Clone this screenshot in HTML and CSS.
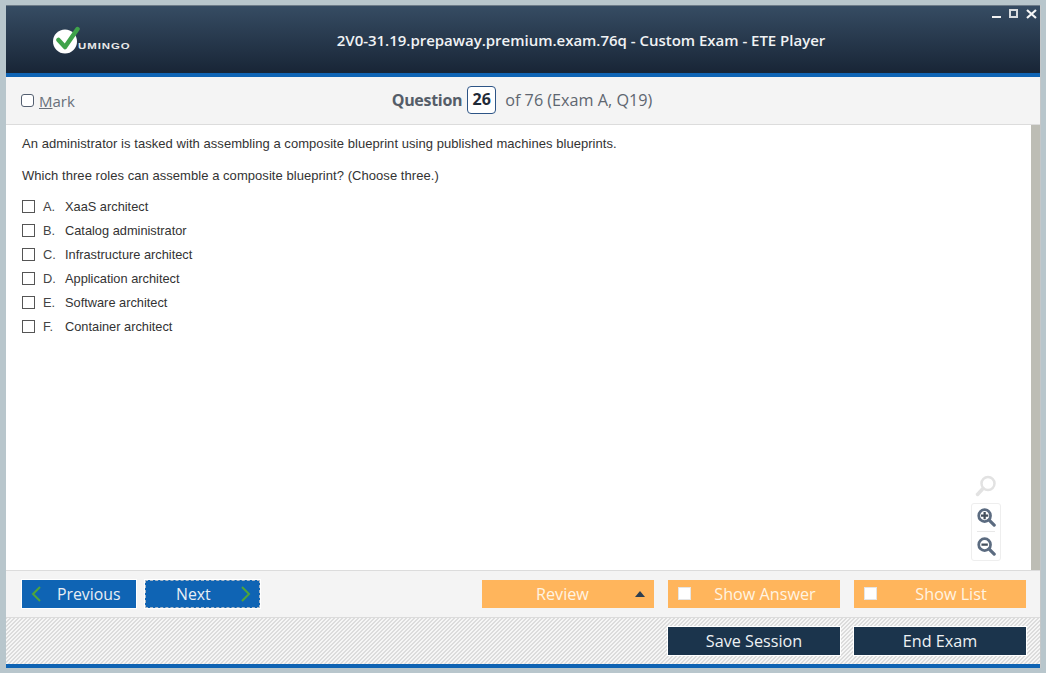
FILE: index.html
```html
<!DOCTYPE html>
<html lang="en">
<head>
<meta charset="utf-8">
<title>ETE Player</title>
<link rel="stylesheet" href="styles.css">
</head>
<body>
<div class="window">
  <header class="titlebar">
    <div class="logo">
      <svg class="logo-mark" width="30" height="28" viewBox="0 0 30 28">
        <circle cx="13" cy="15.500" r="12" fill="#fff"/>
        <path d="M6.500 14 L13 21 L25.500 3" fill="none" stroke="#3fa34a" stroke-width="4.500" stroke-linecap="round" stroke-linejoin="round"/>
      </svg>
      <span class="logo-text">UMINGO</span>
    </div>
    <h1 class="title">2V0-31.19.prepaway.premium.exam.76q - Custom Exam - ETE Player</h1>
    <div class="winctl">
      <svg width="50" height="16" viewBox="0 0 50 16">
        <rect x="2" y="10" width="9" height="2" fill="#f2f2f2"/>
        <rect x="20" y="4" width="7" height="7" fill="none" stroke="#d8dcdf" stroke-width="2"/>
        <path d="M37 4 L46 12 M46 4 L37 12" stroke="#f5f5f5" stroke-width="2.200"/>
      </svg>
    </div>
  </header>
  <div class="toolbar">
    <label class="mark"><span class="mark-box"></span><span><u>M</u>ark</span></label>
    <div class="qinfo"><b>Question</b><span class="qnum">26</span><span class="qrest">of 76 (Exam A, Q19)</span></div>
  </div>
  <main class="content">
    <div class="question">
      <p class="para">An administrator is tasked with assembling a composite blueprint using published machines blueprints.</p>
      <p class="para">Which three roles can assemble a composite blueprint? (Choose three.)</p>
      <ul class="options">
        <li class="option"><span class="box"></span><span class="letter">A.</span><span>XaaS architect</span></li>
        <li class="option"><span class="box"></span><span class="letter">B.</span><span>Catalog administrator</span></li>
        <li class="option"><span class="box"></span><span class="letter">C.</span><span>Infrastructure architect</span></li>
        <li class="option"><span class="box"></span><span class="letter">D.</span><span>Application architect</span></li>
        <li class="option"><span class="box"></span><span class="letter">E.</span><span>Software architect</span></li>
        <li class="option"><span class="box"></span><span class="letter">F.</span><span>Container architect</span></li>
      </ul>
    </div>
    <div class="zoomtools">
      <svg class="zoom-reset" width="24" height="24" viewBox="0 0 24 24"><circle cx="14" cy="9.500" r="6.500" fill="none" stroke="#e2e2e2" stroke-width="2.500"/><path d="M9 14.500 L3.500 20.500" stroke="#e2e2e2" stroke-width="3.500" stroke-linecap="round"/></svg>
      <div class="zoom-panel">
        <svg class="zoom-icon" width="20" height="20" viewBox="0 0 22 22"><circle cx="9.500" cy="9.500" r="6.500" fill="none" stroke="#5b6b80" stroke-width="3"/><path d="M14.500 14.500 L20 20" stroke="#5b6b80" stroke-width="3.500" stroke-linecap="round"/><path d="M5.500 9.500 H13.500 M9.500 5.500 V13.500" stroke="#444f5c" stroke-width="2.500"/></svg>
        <span class="zoom-sep"></span>
        <svg class="zoom-icon" width="20" height="20" viewBox="0 0 22 22"><circle cx="9.500" cy="9.500" r="6.500" fill="none" stroke="#5b6b80" stroke-width="3"/><path d="M14.500 14.500 L20 20" stroke="#5b6b80" stroke-width="3.500" stroke-linecap="round"/><path d="M6 9.500 H13" stroke="#444f5c" stroke-width="2.500"/></svg>
      </div>
    </div>
    <div class="scrollbar"></div>
  </main>
  <div class="actions">
    <div class="nav">
      <button class="btn btn-blue btn-prev"><svg width="12" height="18" viewBox="0 0 12 18"><path d="M10 2 L3 9 L10 16" fill="none" stroke="#4fa53a" stroke-width="2"/></svg><span>Previous</span></button>
      <button class="btn btn-blue btn-next"><span>Next</span><svg width="12" height="18" viewBox="0 0 12 18"><path d="M2 2 L9 9 L2 16" fill="none" stroke="#4fa53a" stroke-width="2"/></svg></button>
    </div>
    <div class="tools">
      <button class="btn btn-orange btn-review"><span>Review</span><i class="caret"></i></button>
      <button class="btn btn-orange btn-check"><i class="tick"></i><span>Show Answer</span></button>
      <button class="btn btn-orange btn-check"><i class="tick"></i><span>Show List</span></button>
    </div>
  </div>
  <footer class="footer">
    <button class="btn btn-navy">Save Session</button>
    <button class="btn btn-navy">End Exam</button>
  </footer>
</div>
</body>
</html>
```
FILE: styles.css
```css
* { box-sizing: border-box; }
html, body { margin: 0; height: 100%; }
body {
  background: #b8c6cc;
  padding: 5px 5px 4px 6px;
  overflow: hidden;
  font-family: "Open Sans", "Noto Sans", sans-serif;
}
.window {
  width: 1035px;
  height: 663px;
  display: flex;
  flex-direction: column;
  background: #fff;
  border-right: 1px solid #c4c8ca;
}
.titlebar {
  height: 72px;
  flex: none;
  display: flex;
  align-items: center;
  justify-content: center;
  position: relative;
  padding-left: 116px;
  background: linear-gradient(#364c63, #182536);
  border-top: 1px solid #6d7b88;
  border-bottom: 4px solid #0f64b4;
}
.logo {
  position: absolute;
  left: 46px;
  top: 20px;
  display: flex;
  align-items: flex-end;
}
.logo-mark { display: block; }
.logo-text {
  font: bold 9.500px "Liberation Sans", sans-serif;
  letter-spacing: 0.800px;
  color: #e8e8e8;
  margin-left: -4px;
  margin-bottom: 3px;
  transform: scaleX(1.200);
  transform-origin: left;
}
.title {
  margin: 1px 0 0;
  font-size: 15px;
  font-weight: 600;
  letter-spacing: -0.020px;
  color: #f0f2f4;
}
.winctl { position: absolute; right: 0; top: 0; line-height: 0; }
.toolbar {
  height: 48px;
  flex: none;
  display: flex;
  align-items: center;
  justify-content: center;
  position: relative;
  padding: 0 2px 2px 0;
  background: #f4f4f4;
  border-bottom: 1px solid #dcdcdc;
  color: #5e6670;
  font-size: 15px;
}
.mark {
  position: absolute;
  left: 15px;
  top: 14px;
  display: flex;
  align-items: center;
  gap: 5px;
  color: #68707a;
}
.mark-box {
  width: 13px;
  height: 13px;
  margin-top: -2px;
  border: 1.500px solid #545f70;
  border-radius: 3px;
  background: #fff;
}
.qinfo { display: flex; align-items: center; }
.qinfo b { font-size: 16px; letter-spacing: -0.300px; font-weight: 700; color: #555d68; }
.qnum {
  width: 29px;
  height: 28px;
  margin: 0 9px 0 5px;
  border: 1.500px solid #2d5486;
  border-radius: 4px;
  background: #fff;
  color: #1f2a38;
  font-weight: 700;
  font-size: 16px;
  text-align: center;
  line-height: 25px;
}
.qrest { font-size: 16.200px; }
.content {
  flex: 1;
  position: relative;
  background: #fff;
  font: 13px "Liberation Sans", Arial, sans-serif;
  letter-spacing: 0.050px;
  color: #333;
}
.question { padding: 12px 0 0 16px; }
.para { margin: 0 0 18px; line-height: 14px; }
.options { list-style: none; margin: -7px 0 0; padding: 0; font-size: 12.800px; letter-spacing: 0; }
.option { height: 24px; display: flex; align-items: center; }
.box {
  width: 13px;
  height: 13px;
  border: 1px solid #555;
  background: #fff;
  margin-right: 8px;
}
.letter { width: 22px; color: #444; }
.zoomtools {
  position: absolute;
  right: 39px;
  top: 349px;
  width: 30px;
  display: flex;
  flex-direction: column;
  align-items: center;
  gap: 5px;
}
.zoom-panel {
  width: 30px;
  height: 58px;
  border: 1px solid #eeeeee;
  border-radius: 3px;
  display: flex;
  flex-direction: column;
  align-items: center;
  justify-content: space-between;
  padding: 3px 0 4px;
}
.zoom-icon { display: block; }
.zoom-sep { width: 18px; height: 1px; background: #e8e8e8; }
.scrollbar {
  position: absolute;
  right: 0;
  top: 0;
  bottom: 0;
  width: 9px;
  background: #bdbdb5;
}
.actions {
  height: 47px;
  flex: none;
  display: flex;
  align-items: center;
  justify-content: space-between;
  padding: 0 14px 1px 16px;
  background: #f4f4f4;
  border-top: 1px solid #dcdcdc;
}
.nav, .tools { display: flex; }
.nav { gap: 9px; }
.tools { gap: 14px; }
.btn {
  height: 28px;
  padding: 0;
  border: 0;
  font-family: "Open Sans", "Noto Sans", sans-serif;
  font-size: 16.200px;
  color: #fff;
  display: flex;
  align-items: center;
  position: relative;
}
.btn-blue {
  width: 114px;
  font-size: 15.800px;
  background: #0f64b4;
  color: #e8eef5;
  outline: 1px solid #fff;
}
.btn-prev { padding-left: 8px; }
.btn-prev span { margin-left: 15px; }
.btn-next {
  width: 115px;
  padding: 0 7px 0 30px;
  justify-content: space-between;
  border: 1px dashed #a9b9c9;
}
.btn-orange {
  width: 172px;
  background: #ffb55c;
  color: #fff4e2;
}
.btn-review { padding: 0 9px 0 54px; justify-content: space-between; }
.caret {
  width: 0;
  height: 0;
  border-left: 5px solid transparent;
  border-right: 5px solid transparent;
  border-bottom: 6px solid #2c3e50;
}
.btn-check { padding-left: 10px; }
.tick {
  width: 13px;
  height: 13px;
  background: #fff;
  border: 1px solid #e5e5e5;
  flex: none;
}
.btn-check span { flex: 1; text-align: center; padding-right: 1px; }
.footer {
  height: 51px;
  flex: none;
  display: flex;
  justify-content: flex-end;
  align-items: flex-start;
  gap: 14px;
  padding: 9px 14px 0 0;
  background: repeating-linear-gradient(135deg, #dcdcdc 0, #dcdcdc 1.060px, #f6f6f6 1.060px, #f6f6f6 2.828px);
  border-top: 1px solid #dcdcdc;
  border-bottom: 4px solid #0f64b4;
}
.btn-navy {
  width: 172px;
  background: #1b344c;
  color: #eef1f4;
  justify-content: center;
  outline: 1px solid #fff;
}
```
